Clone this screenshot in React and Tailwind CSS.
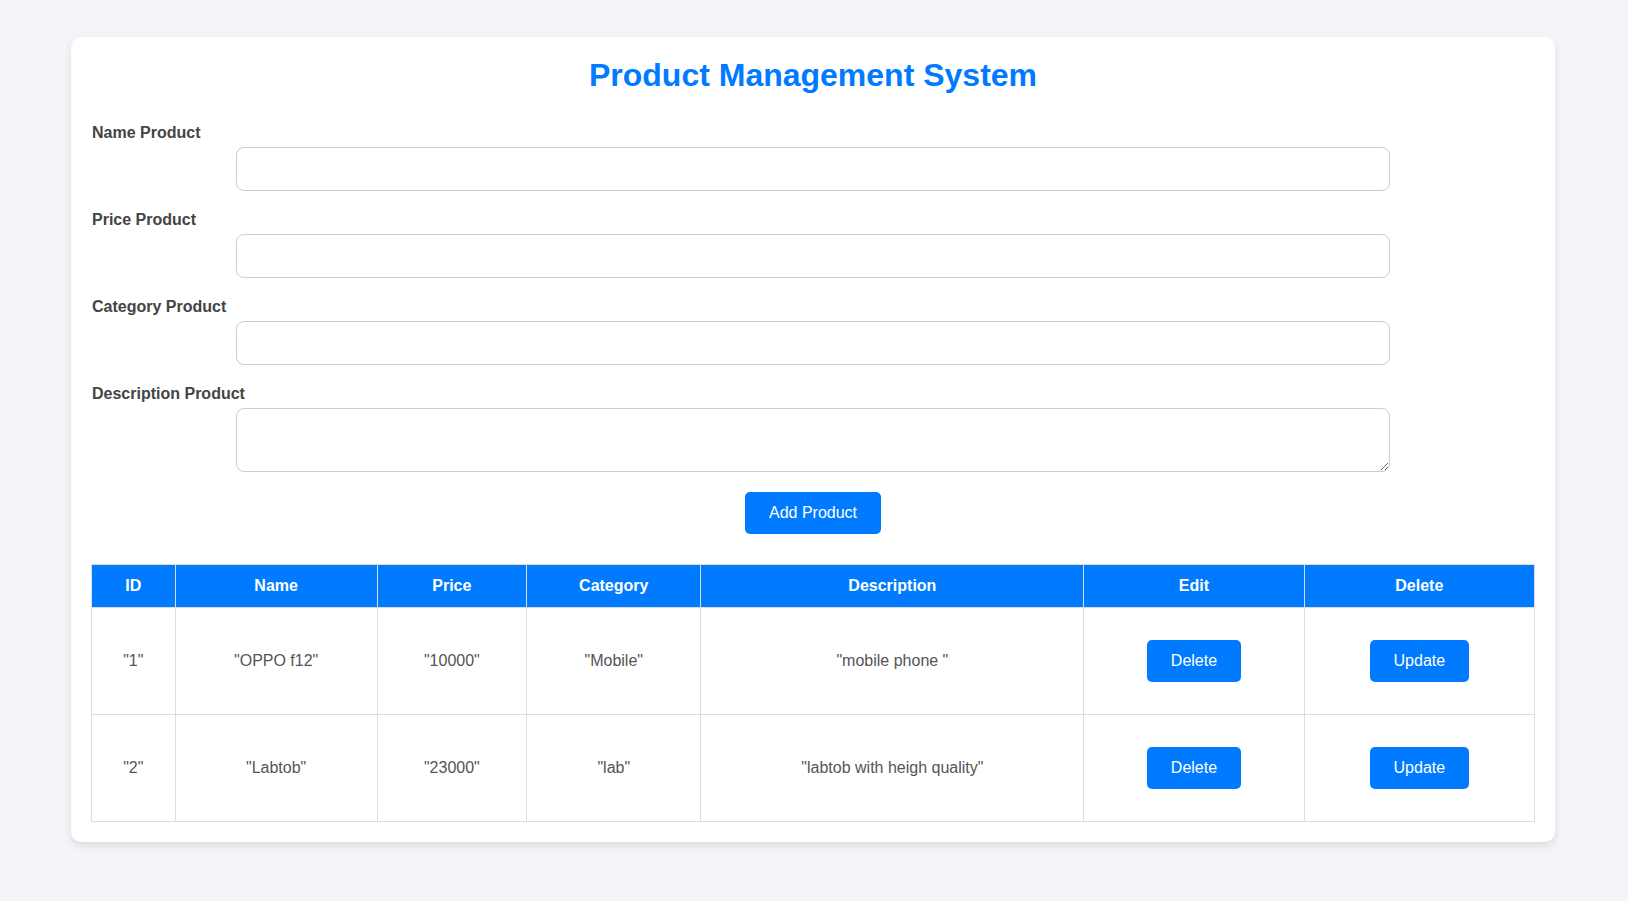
import React from "react";

const fields = [
  { id: "name", label: "Name Product" },
  { id: "price", label: "Price Product" },
  { id: "category", label: "Category Product" },
];

const columns = ["ID", "Name", "Price", "Category", "Description", "Edit", "Delete"];

const products = [
  { id: "1", name: "OPPO f12", price: "10000", category: "Mobile", description: "mobile phone " },
  { id: "2", name: "Labtob", price: "23000", category: "lab", description: "labtob with heigh quality" },
];

const controlClass =
  "mx-auto block w-4/5 rounded-lg border border-[#ccc] bg-white px-3 text-base text-[#444]";

function Button({ type = "button", className = "", children }) {
  return (
    <button
      type={type}
      className={`cursor-pointer rounded-[5px] bg-[#007bff] px-6 py-3 text-base leading-[18px] text-white hover:bg-[#0056b3] ${className}`}
    >
      {children}
    </button>
  );
}

function Label({ htmlFor, children }) {
  return (
    <label htmlFor={htmlFor} className="mb-[5px] block text-base leading-[18px] font-bold text-[#444]">
      {children}
    </label>
  );
}

function Cell({ children }) {
  return <td className="border border-[#ddd] p-3">{children}</td>;
}

export default function App() {
  return (
    <div className="min-h-screen bg-[#f4f4f9] pt-[37px] pr-[73px] pb-10 pl-[71px] font-['Liberation_Sans',Arial,sans-serif]">
      <main className="rounded-[10px] bg-white p-5 shadow-[0_4px_8px_rgba(0,0,0,0.1)]">
        <h1 className="mb-[30px] text-center text-[32px] leading-[37px] font-bold text-[#007bff]">
          Product Management System
        </h1>

        <form className="flex flex-col gap-5 px-px" onSubmit={(e) => e.preventDefault()}>
          {fields.map((field) => (
            <div key={field.id}>
              <Label htmlFor={field.id}>{field.label}</Label>
              <input id={field.id} name={field.id} type="text" className={`${controlClass} h-11`} />
            </div>
          ))}
          <div>
            <Label htmlFor="description">Description Product</Label>
            <textarea id="description" name="description" className={`${controlClass} h-16 resize py-3`} />
          </div>
          <Button type="submit" className="self-center">Add Product</Button>
        </form>

        <table className="mt-[30px] w-full border-collapse text-center text-base leading-[18px] text-[#555]">
          <thead>
            <tr>
              {columns.map((column) => (
                <th key={column} scope="col" className="border border-[#ddd] bg-[#007bff] p-3 font-bold text-white">
                  {column}
                </th>
              ))}
            </tr>
          </thead>
          <tbody>
            {products.map((product) => (
              <tr key={product.id}>
                <Cell>{`"${product.id}"`}</Cell>
                <Cell>{`"${product.name}"`}</Cell>
                <Cell>{`"${product.price}"`}</Cell>
                <Cell>{`"${product.category}"`}</Cell>
                <Cell>{`"${product.description}"`}</Cell>
                <Cell>
                  <Button className="my-5 align-top">Delete</Button>
                </Cell>
                <Cell>
                  <Button className="my-5 align-top">Update</Button>
                </Cell>
              </tr>
            ))}
          </tbody>
        </table>
      </main>
    </div>
  );
}
